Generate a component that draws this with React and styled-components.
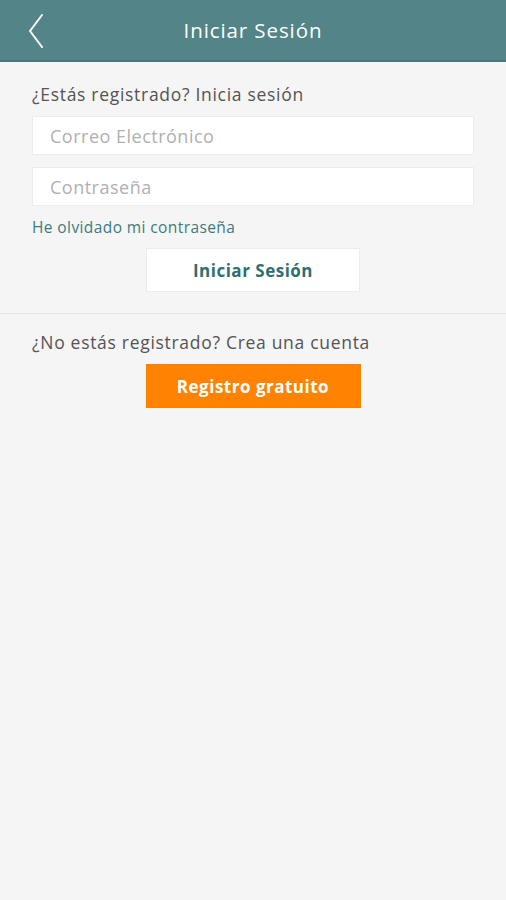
import React from 'react';
import styled, { createGlobalStyle } from 'styled-components';

const GlobalStyle = createGlobalStyle`
  html, body {
    margin: 0;
    padding: 0;
    background: #f5f5f5;
    font-family: "Open Sans", Lato, "Liberation Sans", sans-serif;
  }
`;

const Page = styled.div`
  min-height: 900px;
  background: #f5f5f5;
`;

const Header = styled.header`
  height: 60px;
  background: #528488;
  border-bottom: 2px solid #47777b;
  display: flex;
  align-items: center;
  justify-content: center;
  position: relative;
`;

const BackButton = styled.button`
  position: absolute;
  left: 24px;
  top: 13px;
  width: 24px;
  height: 36px;
  padding: 0;
  border: none;
  background: transparent;
  display: flex;
  align-items: center;
  justify-content: center;
`;

const Title = styled.h1`
  margin: 0 0 1px;
  color: #ffffff;
  font-size: 20.5px;
  font-weight: 400;
  letter-spacing: 0.9px;
`;

const Section = styled.section`
  padding: ${p => p.$pad};
  display: flex;
  flex-direction: column;
  border-bottom: ${p => (p.$divider ? '1px solid #e6e6e6' : 'none')};
`;

const Lead = styled.p`
  margin: 0 0 ${p => p.$gap}px;
  color: #545454;
  font-size: 17.5px;
  line-height: 22px;
  letter-spacing: 0.7px;
`;

const Field = styled.input`
  box-sizing: border-box;
  height: 39px;
  width: 100%;
  margin-bottom: ${p => p.$gap}px;
  padding: 0 17px;
  border: 1px solid #ececec;
  background: #ffffff;
  font-family: inherit;
  font-size: 18px;
  letter-spacing: 0.5px;
  color: #444;
  outline: none;
  &::placeholder {
    color: #b0b0b0;
  }
`;

const ForgotLink = styled.a`
  color: #3c7c7e;
  font-size: 15.5px;
  line-height: 20px;
  letter-spacing: 0.4px;
  text-decoration: none;
  margin: 0 0 11px;
`;

const ActionButton = styled.button`
  align-self: center;
  width: ${p => p.$w}px;
  height: 44px;
  border: 1px solid ${p => (p.$primary ? '#fb8000' : '#ececec')};
  background: ${p => (p.$primary ? '#ff8200' : '#ffffff')};
  color: ${p => (p.$primary ? '#ffffff' : '#2f6f72')};
  font-family: inherit;
  font-size: 17px;
  font-weight: 700;
  letter-spacing: 0.5px;
  cursor: pointer;
`;

export default function App() {
  return (
    <Page>
      <GlobalStyle />
      <Header>
        <BackButton aria-label="Volver">
          <svg width="16" height="34" viewBox="0 0 16 34" fill="none">
            <path d="M14 1 L2 17 L14 33" stroke="#ffffff" strokeWidth="2" strokeLinecap="round" strokeLinejoin="round" />
          </svg>
        </BackButton>
        <Title>Iniciar Sesión</Title>
      </Header>

      <Section $pad="21px 32px 21px" $divider>
        <Lead $gap={11}>¿Estás registrado? Inicia sesión</Lead>
        <Field type="email" placeholder="Correo Electrónico" $gap={12} />
        <Field type="password" placeholder="Contraseña" $gap={11} />
        <ForgotLink href="#">He olvidado mi contraseña</ForgotLink>
        <ActionButton $w={214}>Iniciar Sesión</ActionButton>
      </Section>

      <Section $pad="17px 32px">
        <Lead $gap={11}>¿No estás registrado? Crea una cuenta</Lead>
        <ActionButton $primary $w={215}>Registro gratuito</ActionButton>
      </Section>
    </Page>
  );
}
